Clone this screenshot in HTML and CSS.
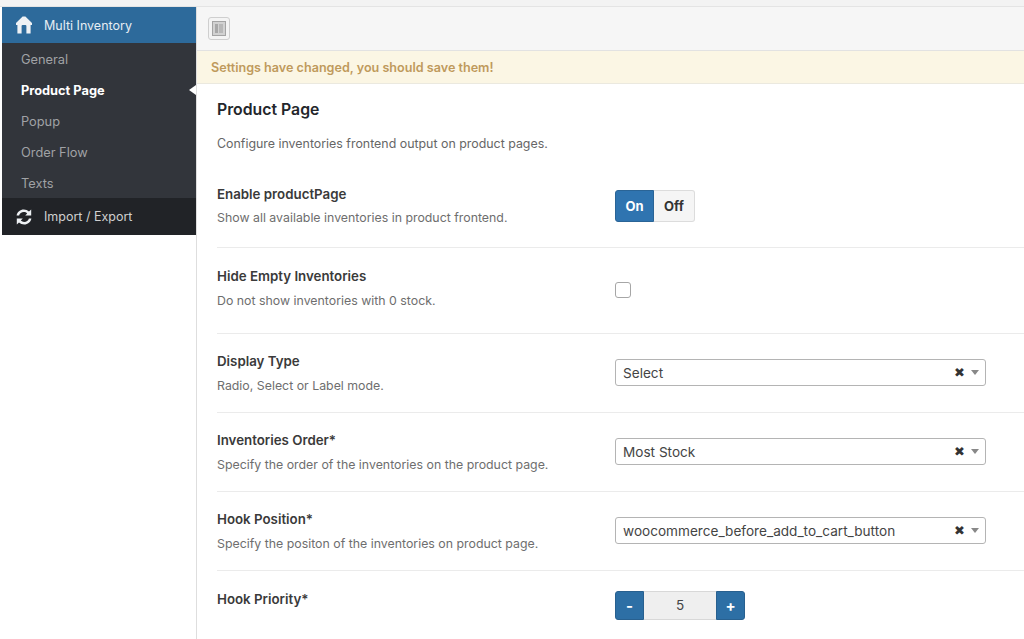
FILE: index.html
```html
<!DOCTYPE html>
<html lang="en">
<head>
<meta charset="utf-8">
<title>Multi Inventory</title>
<link rel="stylesheet" href="styles.css">
</head>
<body>
<div class="topstrip"></div>
<div class="layout">
  <aside class="sidebar">
    <div class="menu">
      <div class="menu-head">
        <svg class="icon-home" viewBox="0 0 18 18"><path d="M7.6 .4 H10.4 L17 7 V9 H15.6 V17.6 H11.4 V10 Q11.4 9 10.4 9 H7.6 Q6.6 9 6.6 10 V17.6 H2.4 V9 H1 V7 Z"/></svg>
        <span>Multi Inventory</span>
      </div>
      <nav class="submenu">
        <a class="sub">General</a>
        <a class="sub active">Product Page</a>
        <a class="sub">Popup</a>
        <a class="sub">Order Flow</a>
        <a class="sub">Texts</a>
      </nav>
      <div class="menu-foot">
        <svg class="icon-refresh" viewBox="0 0 18 18"><path d="M1.6 7.6 C2.2 4 5.2 1.6 8.8 1.6 C10.8 1.6 12.6 2.3 14 3.6 L16.2 1.4 V7.4 H10.2 L12.2 5.4 C11.3 4.6 10.1 4.1 8.8 4.1 C6.5 4.1 4.7 5.5 4.1 7.6 Z"/><path d="M16.4 10.4 C15.8 14 12.8 16.4 9.2 16.4 C7.2 16.4 5.4 15.7 4 14.4 L1.8 16.6 V10.6 H7.8 L5.8 12.6 C6.7 13.4 7.9 13.9 9.2 13.9 C11.5 13.9 13.3 12.5 13.9 10.4 Z"/></svg>
        <span>Import / Export</span>
      </div>
    </div>
  </aside>
  <main class="main">
    <div class="toolbar">
      <button class="layout-btn" type="button" aria-label="Toggle sidebar"><span class="layout-glyph"><i></i><b></b></span></button>
    </div>
    <div class="notice">Settings have changed, you should save them!</div>
    <section class="content">
      <header class="page-head">
        <h1>Product Page</h1>
        <p>Configure inventories frontend output on product pages.</p>
      </header>

      <div class="row row-enable">
        <div class="info"><h2>Enable productPage</h2><p>Show all available inventories in product frontend.</p></div>
        <div class="control">
          <div class="switch"><span class="on">On</span><span class="off">Off</span></div>
        </div>
      </div>

      <div class="row row-hide">
        <div class="info"><h2>Hide Empty Inventories</h2><p>Do not show inventories with 0 stock.</p></div>
        <div class="control"><span class="checkbox"></span></div>
      </div>

      <div class="row row-select">
        <div class="info"><h2>Display Type</h2><p>Radio, Select or Label mode.</p></div>
        <div class="control"><div class="select"><span class="value">Select</span><span class="clear">&#10006;</span><span class="caret"></span></div></div>
      </div>

      <div class="row row-select">
        <div class="info"><h2>Inventories Order*</h2><p>Specify the order of the inventories on the product page.</p></div>
        <div class="control"><div class="select"><span class="value">Most Stock</span><span class="clear">&#10006;</span><span class="caret"></span></div></div>
      </div>

      <div class="row row-select">
        <div class="info"><h2>Hook Position*</h2><p>Specify the positon of the inventories on product page.</p></div>
        <div class="control"><div class="select"><span class="value">woocommerce_before_add_to_cart_button</span><span class="clear">&#10006;</span><span class="caret"></span></div></div>
      </div>

      <div class="row row-last">
        <div class="info"><h2>Hook Priority*</h2></div>
        <div class="control">
          <div class="spinner"><span class="spin-btn">-</span><span class="spin-value">5</span><span class="spin-btn">+</span></div>
        </div>
      </div>
    </section>
  </main>
</div>
</body>
</html>
```

FILE: styles.css
```css
* { box-sizing: border-box; }
html, body { margin: 0; height: 100%; overflow: hidden; }
body {
  width: 1024px;
  height: 639px;
  background: #fff;
  font-family: Inter, "Liberation Sans", sans-serif;
  color: #333;
  font-size: 12px;
}
.topstrip { height: 7px; background: #f3f3f3; border-bottom: 1px solid #e4e4e4; }
.layout { display: flex; height: 632px; }
.sidebar { width: 197px; padding-left: 2px; border-right: 1px solid #dedede; background: #fff; flex: none; }
.menu { width: 194px; }
.menu-head, .menu-foot {
  display: flex;
  align-items: center;
  height: 37px;
  padding-left: 13px;
  gap: 11px;
  font-size: 12.5px;
}
.menu-head { height: 36px; background: #2d6a9b; color: #e6edf3; }
.menu-foot { background: #212327; color: #d0d0d0; }
.icon-home, .icon-refresh { width: 18px; height: 18px; fill: #eef1f4; flex: none; }
.submenu { background: #32353b; padding-top: 1px; height: 155px; overflow: hidden; }
.sub {
  display: block;
  position: relative;
  height: 31px;
  line-height: 31px;
  padding-left: 19px;
  color: #a0a2a5;
  font-size: 12.8px;
}
.sub.active { color: #fff; font-weight: 700; }
.sub.active::after {
  content: "";
  position: absolute;
  right: 0;
  top: 10px;
  border: 5px solid transparent;
  border-left-width: 0;
  border-right: 7px solid #fff;
}
.main { width: 827px; flex: none; }
.toolbar {
  height: 44px;
  padding: 10px 0 0 11px;
  background: #f6f6f6;
  border-bottom: 1px solid #e2e2e2;
}
.layout-btn {
  display: block;
  width: 22px;
  height: 23px;
  padding: 3px;
  border: 1px solid #cfcfcf;
  border-radius: 3px;
  background: #f4f4f4;
}
.layout-glyph {
  display: flex;
  width: 14px;
  height: 15px;
  padding: 2px;
  gap: 1px;
  background: #d2d2d2;
  border: 1px solid #a4a4a4;
}
.layout-glyph i { width: 3px; background: #a8a8a8; }
.layout-glyph b { flex: 1; background: #b8b8b8; }
.notice {
  height: 33px;
  padding-left: 14px;
  line-height: 33px;
  background: #fbf6e4;
  border-bottom: 1px solid #ebe9df;
  color: #bf9a5c;
  font-size: 12.6px;
  font-weight: 600;
}
.content { padding-left: 20px; }
.page-head { height: 102px; padding-top: 15px; }
.page-head h1 { margin: 0; font-size: 15.8px; line-height: 22px; font-weight: 600; color: #23262b; }
.page-head p { margin: 13px 0 0; font-size: 12.4px; line-height: 20px; color: #666; }
.row { display: flex; border-bottom: 1px solid #ebebeb; }
.row-enable { height: 62px; }
.row-enable p { margin-top: 6px; }
.row-hide { height: 86px; padding-top: 20px; }
.row-select { height: 79px; padding-top: 19px; }
.row-last { border-bottom: 0; padding-top: 20px; }
.info { width: 398px; flex: none; }
.info h2 { margin: 0; font-size: 13.3px; line-height: 17px; font-weight: 600; color: #3a3a3a; }
.info p { margin: 7px 0 0; font-size: 12.35px; line-height: 17px; color: #6e6e6e; }
.row-enable .info p { margin-top: 6px; }
.switch { display: flex; width: 80px; height: 32px; margin-top: 4px; font-size: 13px; font-weight: 700; line-height: 30px; text-align: center; border-radius: 3px; }
.on { width: 39px; background: #2f74b0; color: #fff; border: 1px solid #2a6496; border-radius: 3px 0 0 3px; }
.off { flex: 1; background: #f5f5f5; color: #333; border: 1px solid #dcdcdc; border-left: 0; border-radius: 0 3px 3px 0; }
.checkbox { display: block; width: 16px; height: 16px; background: #fff; border: 1px solid #a6a6a6; border-radius: 3px; margin-top: 14px; }
.select {
  display: flex;
  align-items: center;
  width: 371px;
  height: 27px;
  margin-top: 6px;
  padding: 0 6px 0 7px;
  border: 1px solid #b4b4b4;
  border-radius: 3px;
  font-size: 13.6px;
  color: #444;
  background: #fff;
}
.value { flex: 1; white-space: nowrap; }
.clear { font-size: 13px; color: #333; margin-right: 6px; line-height: 1; }
.caret { width: 0; height: 0; border: 4px solid transparent; border-top: 5px solid #888; border-bottom-width: 0; }
.spinner { display: flex; width: 130px; height: 29px; text-align: center; line-height: 27px; }
.spin-btn { width: 29px; background: #2d6fa5; color: #fff; border: 1px solid #28608f; font-weight: 700; font-size: 15px; border-radius: 3px; }
.spin-btn:first-child { border-radius: 3px 0 0 3px; }
.spin-btn:last-child { border-radius: 0 3px 3px 0; }
.spin-value { flex: 1; background: #efefef; border-top: 1px solid #d8d8d8; border-bottom: 1px solid #d8d8d8; font-size: 13.5px; color: #444; }
```
